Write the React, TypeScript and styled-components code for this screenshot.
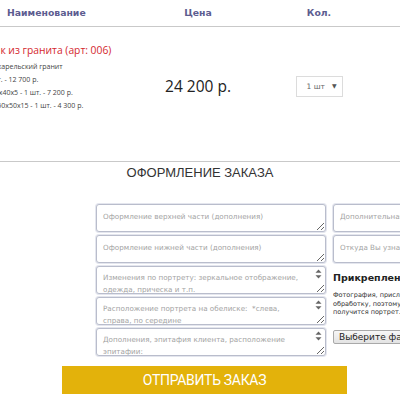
import styled, { createGlobalStyle } from "styled-components";

const GlobalStyle = createGlobalStyle`
  html, body {
    margin: 0;
    padding: 0;
    background: #fff;
    overflow: hidden;
  }
  * {
    box-sizing: border-box;
  }
`;

const leftFields = [
  { text: "Оформление верхней части (дополнения)", spin: false },
  { text: "Оформление нижней части (дополнения)", spin: false },
  { text: "Изменения по портрету: зеркальное отображение, одежда, прическа и т.п.", spin: true },
  { text: "Расположение портрета на обелиске:  *слева, справа, по середине", spin: true },
  { text: "Дополнения, эпитафия клиента, расположение эпитафии:", spin: true },
];

const rightFields = ["Дополнительная информация", "Откуда Вы узнали о нас?"];

const itemLines = [
  "Материал: карельский гранит",
  "Стела - 1 шт. - 12 700 р.",
  "Цветник 80x40x5 - 1 шт. - 7 200 р.",
  "Подставка 50x50x15 - 1 шт. - 4 300 р.",
];

const SpinIcon = () => (
  <svg width="7" height="10" viewBox="0 0 7 10">
    <path d="M3.5 0.5 L6.5 3.8 L0.5 3.8 Z" fill="#666" />
    <path d="M0.5 6.2 L6.5 6.2 L3.5 9.5 Z" fill="#666" />
  </svg>
);

const App = () => {
  return (
    <Page>
      <GlobalStyle />
      <Cart>
        <HeadRow>
          <HeadCell>Наименование</HeadCell>
          <HeadCell $center>Цена</HeadCell>
          <HeadCell $center>Кол.</HeadCell>
        </HeadRow>
        <ItemRow>
          <ItemInfo>
            <ItemTitle>Памятник из гранита (арт: 006)</ItemTitle>
            <ItemLines>
              {itemLines.map((line) => (
                <li key={line}>{line}</li>
              ))}
            </ItemLines>
          </ItemInfo>
          <Price>24 200 р.</Price>
          <QtyCell>
            <QtySelect>
              <span>1 шт</span>
              <Arrow>▼</Arrow>
            </QtySelect>
          </QtyCell>
        </ItemRow>
      </Cart>

      <OrderSection>
        <SectionTitle>ОФОРМЛЕНИЕ ЗАКАЗА</SectionTitle>
        <FormGrid>
          <Column>
            {leftFields.map((f) => (
              <FieldWrap key={f.text}>
                <Field placeholder={f.text} $spin={f.spin} />
                {f.spin && (
                  <Spinner>
                    <SpinIcon />
                  </Spinner>
                )}
              </FieldWrap>
            ))}
          </Column>
          <Column>
            {rightFields.map((text) => (
              <FieldWrap key={text}>
                <Field placeholder={text} />
              </FieldWrap>
            ))}
            <AttachTitle>Прикрепление фото</AttachTitle>
            <AttachNote>
              Фотография, присланная Вами, проходит
              <br />
              обработку, поэтому чем лучше качество, тем лучше
              <br />
              получится портрет.
            </AttachNote>
            <FileButton type="button">Выберите файл</FileButton>
          </Column>
        </FormGrid>
        <SubmitRow>
          <SubmitButton type="button">ОТПРАВИТЬ ЗАКАЗ</SubmitButton>
        </SubmitRow>
      </OrderSection>
    </Page>
  );
};

export default App;

const Page = styled.div`
  width: 400px;
  height: 400px;
  overflow: hidden;
  font-family: "DejaVu Sans", Verdana, sans-serif;
`;

const Cart = styled.div`
  width: 100%;
`;

const Row = styled.div`
  display: grid;
  grid-template-columns: 140px 102px 140px;
  padding-left: 7px;
  border-bottom: 1px solid #c9c9c9;
`;

const HeadRow = styled(Row)`
  height: 27px;
`;

const HeadCell = styled.div<{ $center?: boolean }>`
  font-size: 9.3px;
  font-weight: bold;
  line-height: 26px;
  color: #5c5c90;
  text-align: ${({ $center }) => ($center ? "center" : "left")};
`;

const ItemRow = styled(Row)`
  height: 135px;
  align-items: start;
`;

const ItemInfo = styled.div`
  margin-left: -47px;
  padding-top: 15px;
  white-space: nowrap;
  font-family: "Open Sans", sans-serif;
`;

const ItemTitle = styled.div`
  margin-left: -4px;
  font-size: 10.3px;
  line-height: 16px;
  color: #d4272e;
`;

const ItemLines = styled.ul`
  list-style: none;
  margin: 2px 0 0;
  padding: 0;
  font-size: 7px;
  line-height: 13px;
  color: #444;
`;

const Price = styled.div`
  padding-top: 48px;
  text-align: center;
  font-family: "Open Sans", sans-serif;
  font-size: 15.5px;
  line-height: 22px;
  color: #222;
`;

const QtyCell = styled.div`
  padding-top: 49px;
  display: flex;
  justify-content: center;
`;

const QtySelect = styled.div`
  width: 47px;
  height: 21px;
  border: 1px solid #dcdcdc;
  display: flex;
  align-items: center;
  justify-content: space-between;
  padding: 0 5px 0 10px;
  font-size: 7.5px;
  color: #666;
`;

const Arrow = styled.span`
  font-size: 6px;
  color: #555;
  margin-top: -3px;
`;

const OrderSection = styled.section`
  width: 100%;
`;

const SectionTitle = styled.h2`
  margin: 0;
  font-family: "Liberation Sans", Arial, sans-serif;
  font-weight: normal;
  font-size: 13px;
  line-height: 21px;
  text-align: center;
  color: #333;
`;

const FormGrid = styled.div`
  display: grid;
  grid-template-columns: 230px 230px;
  gap: 7px;
  padding-left: 96px;
  margin-top: 21px;
`;

const Column = styled.div`
  display: flex;
  flex-direction: column;
  gap: 3px;
`;

const FieldWrap = styled.div`
  position: relative;
  height: 28px;
`;

const Field = styled.textarea<{ $spin?: boolean }>`
  display: block;
  width: 100%;
  height: 28px;
  margin: 0;
  border: 1px solid #b9bdcc;
  border-radius: 3px;
  box-shadow: 0 0 0 1px #e4e6ee;
  padding: ${({ $spin }) => ($spin ? "5px 16px 0 6px" : "6px 6px 0")};
  font-family: "DejaVu Sans", Verdana, sans-serif;
  font-size: 7.2px;
  line-height: 12px;
  color: #333;
  background: #fff;
  resize: vertical;
  overflow: hidden;
  outline: none;
  &::placeholder {
    color: #a3a3a3;
  }
`;

const Spinner = styled.span`
  position: absolute;
  top: 3px;
  right: 4px;
  line-height: 0;
`;

const AttachTitle = styled.div`
  margin-top: 5px;
  font-size: 9.5px;
  font-weight: bold;
  line-height: 14px;
  color: #222;
  white-space: nowrap;
`;

const AttachNote = styled.div`
  margin-top: 3px;
  font-size: 6.5px;
  line-height: 8.5px;
  color: #333;
  white-space: nowrap;
`;

const FileButton = styled.button`
  align-self: flex-start;
  margin-top: 10px;
  height: 14px;
  padding: 0 5px;
  border: 1px solid #a9a9a9;
  border-radius: 2px;
  background: linear-gradient(#f7f7f7, #e3e3e3);
  font-family: "DejaVu Sans", Verdana, sans-serif;
  font-size: 9px;
  line-height: 12px;
  color: #222;
  white-space: nowrap;
`;

const SubmitRow = styled.div`
  padding-left: 62px;
  margin-top: 10px;
`;

const SubmitButton = styled.button`
  width: 285px;
  height: 28px;
  border: none;
  background: #e3b20b;
  color: #fff;
  font-family: Roboto, "Liberation Sans", sans-serif;
  font-size: 14px;
  letter-spacing: -0.3px;
  cursor: pointer;
`;
